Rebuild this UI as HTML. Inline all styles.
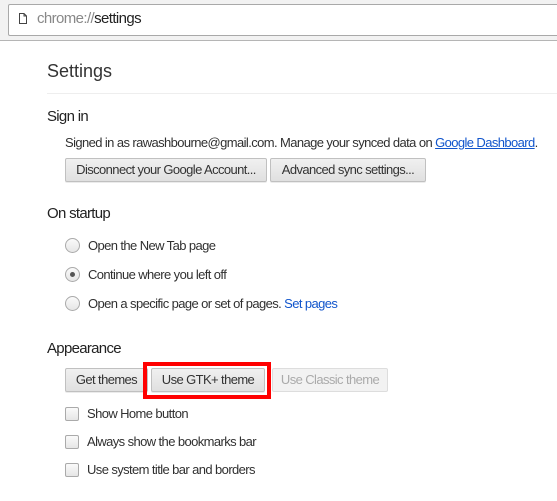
<!DOCTYPE html>
<html><head><style>
body{margin:0;width:557px;height:501px;background:#fff;font-family:"Liberation Sans",Arial,sans-serif;position:relative;overflow:hidden;color:#303030}
.a{position:absolute;white-space:nowrap}
#top{position:absolute;left:0;top:0;width:557px;height:40px;background:#f2f2f2;border-bottom:1px solid #b5b5b5}
#url{position:absolute;left:8px;top:4px;width:560px;height:30px;background:#fff;border:1px solid #a9a9a9;border-radius:2px}
.h{font-size:15px;color:#222;letter-spacing:-0.7px}
.t{font-size:13px;color:#303030;letter-spacing:-0.6px}
.btn{position:absolute;height:22px;border:1px solid #c0c0c0;border-radius:2px;background:linear-gradient(#f0f0f0,#e0e0e0);font-size:13px;letter-spacing:-0.6px;color:#333;line-height:22px;text-align:center;box-shadow:0 1px 0 rgba(0,0,0,.08)}
.rad{position:absolute;width:13px;height:13px;border:1px solid #aaa;border-radius:50%;background:linear-gradient(#fafafa,#e6e6e6)}
.cb{position:absolute;width:12px;height:12px;border:1px solid #aaa;border-radius:2px;background:linear-gradient(#fafafa,#e6e6e6)}
a{color:#1155cc}
</style></head><body>
<div id="top"><div id="url"></div></div>
<svg class="a" style="left:18px;top:12px" width="10" height="13" viewBox="0 0 10 13"><path d="M1.5 1.5h4.5l2.5 2.5v7.5h-7z M6 1.5v2.5h2.5" fill="none" stroke="#444" stroke-width="1"/></svg>
<div class="a" style="left:37px;top:10px;font-size:15px;letter-spacing:-0.6px;color:#888">chrome://<span style="color:#222">settings</span></div>
<div class="a" style="left:47px;top:61px;font-size:18px;color:#333">Settings</div>
<div class="a" style="left:47px;top:93px;width:520px;height:1px;background:#eee"></div>
<div class="a h" style="left:47px;top:108px">Sign in</div>
<div class="a t" style="left:65px;top:135px">Signed in as rawashbourne@gmail.com. Manage your synced data on <a href="#x" style="text-decoration:underline">Google Dashboard</a>.</div>
<div class="btn" style="left:65px;top:158px;width:200px">Disconnect your Google Account...</div>
<div class="btn" style="left:270px;top:158px;width:154px">Advanced sync settings...</div>
<div class="a h" style="left:47px;top:205px">On startup</div>
<div class="rad" style="left:65px;top:238px"></div><div class="a t" style="left:88px;top:238px">Open the New Tab page</div>
<div class="rad" style="left:65px;top:267px"><div style="position:absolute;left:4px;top:4px;width:5px;height:5px;border-radius:50%;background:#555"></div></div><div class="a t" style="left:88px;top:267px">Continue where you left off</div>
<div class="rad" style="left:65px;top:296px"></div><div class="a t" style="left:88px;top:296px">Open a specific page or set of pages. <span style="color:#1155cc">Set pages</span></div>
<div class="a h" style="left:47px;top:340px">Appearance</div>
<div class="btn" style="left:65px;top:368px;width:81px">Get themes</div>
<div class="btn" style="left:151px;top:368px;width:112px">Use GTK+ theme</div>
<div class="btn" style="left:272px;top:368px;width:114px;color:#aaa;background:#f2f2f2;border-color:#ddd;box-shadow:none">Use Classic theme</div>
<div class="a" style="left:143px;top:362px;width:120px;height:29px;border:4px solid #f00"></div>
<div class="cb" style="left:65px;top:407px"></div><div class="a t" style="left:87px;top:406px">Show Home button</div>
<div class="cb" style="left:65px;top:435px"></div><div class="a t" style="left:87px;top:434px">Always show the bookmarks bar</div>
<div class="cb" style="left:65px;top:463px"></div><div class="a t" style="left:87px;top:462px">Use system title bar and borders</div>
</body></html>
